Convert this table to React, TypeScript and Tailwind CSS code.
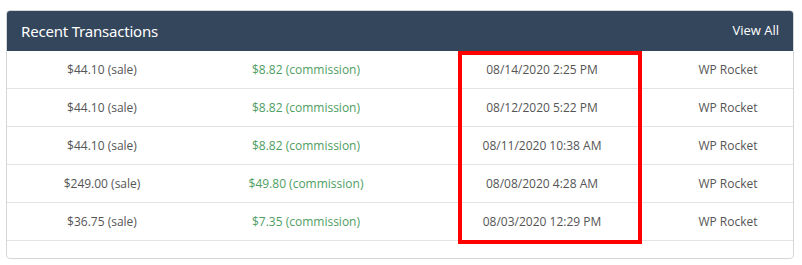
const ROWS = [
  { sale: "$44.10", commission: "$8.82", date: "08/14/2020 2:25 PM", product: "WP Rocket" },
  { sale: "$44.10", commission: "$8.82", date: "08/12/2020 5:22 PM", product: "WP Rocket" },
  { sale: "$44.10", commission: "$8.82", date: "08/11/2020 10:38 AM", product: "WP Rocket" },
  { sale: "$249.00", commission: "$49.80", date: "08/08/2020 4:28 AM", product: "WP Rocket" },
  { sale: "$36.75", commission: "$7.35", date: "08/03/2020 12:29 PM", product: "WP Rocket" },
];

export default function App() {
  return (
    <div className="w-[802px] h-[265px] bg-white pt-[10px] pl-[6px] font-['Open_Sans',sans-serif]">
      <div className="relative w-[788px] h-[249px] rounded-[4px] border border-[#d6d6d6] overflow-hidden">
        {/* Header */}
        <div className="h-[40px] bg-[#34465c] flex items-center justify-between pl-[14px] pr-[14px]">
          <h2 className="text-white text-[15px] font-['Noto_Sans',sans-serif] tracking-[-0.2px]">
            Recent Transactions
          </h2>
          <a className="text-white text-[13px]">View All</a>
        </div>

        {/* Rows */}
        <div>
          {ROWS.map((row, i) => (
            <div
              key={i}
              className="grid grid-cols-[190px_218px_266px_1fr] h-[38px] items-center border-b border-[#e3e3e3] text-[12px]"
            >
              <span className="text-center text-[#555]">{row.sale} (sale)</span>
              <span className="text-center text-[#4e9e62]">
                {row.commission} (commission)
              </span>
              <span className="text-center text-[#555] pr-[12px]">{row.date}</span>
              <span className="text-center text-[#555] pr-[18px]">{row.product}</span>
            </div>
          ))}
        </div>

        {/* highlight box */}
        <div className="absolute left-[451px] top-[40px] w-[184px] h-[193px] border-[4px] border-[#ff0000]" />
      </div>
    </div>
  );
}
